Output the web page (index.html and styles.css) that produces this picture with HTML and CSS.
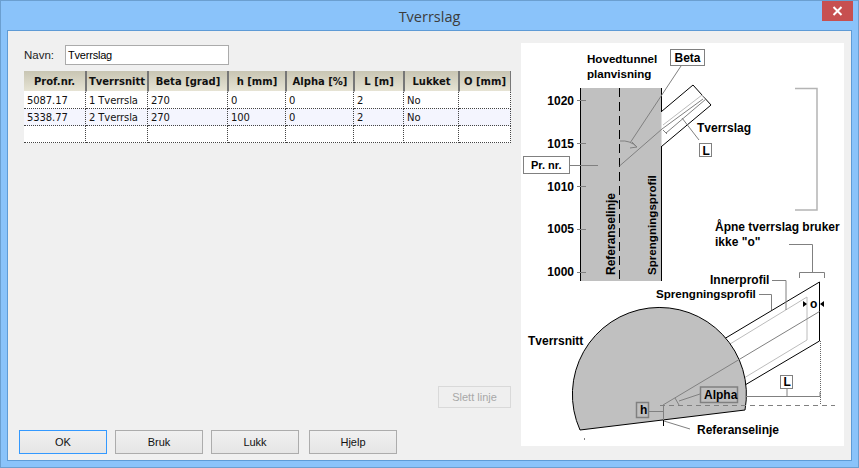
FILE: index.html
```html
<!DOCTYPE html>
<html lang="no">
<head>
<meta charset="utf-8">
<title>Tverrslag</title>
<link rel="stylesheet" href="styles.css">
</head>
<body>
<div class="window">
  <header class="titlebar">
    <span class="title">Tverrslag</span>
    <button class="close" aria-label="Lukk">
      <svg width="11" height="10" viewBox="0 0 11 10"><path d="M1.5 1 L9.5 9 M9.5 1 L1.5 9" stroke="#fff" stroke-width="2" fill="none"/></svg>
    </button>
  </header>
  <div class="client">
    <section class="left">
      <div class="name-row">
        <label class="name-label">Navn:</label>
        <div class="name-input">Tverrslag</div>
      </div>
      <table class="grid">
        <colgroup>
          <col class="c1"><col class="c2"><col class="c3"><col class="c4"><col class="c5"><col class="c6"><col class="c7"><col class="c8">
        </colgroup>
        <thead>
          <tr><th>Prof.nr.</th><th>Tverrsnitt</th><th>Beta [grad]</th><th>h [mm]</th><th>Alpha [%]</th><th>L [m]</th><th>Lukket</th><th>O [mm]</th></tr>
        </thead>
        <tbody>
          <tr><td>5087.17</td><td>1 Tverrsla</td><td>270</td><td>0</td><td>0</td><td>2</td><td>No</td><td></td></tr>
          <tr class="alt"><td>5338.77</td><td>2 Tverrsla</td><td>270</td><td>100</td><td>0</td><td>2</td><td>No</td><td></td></tr>
          <tr><td></td><td></td><td></td><td></td><td></td><td></td><td></td><td></td></tr>
        </tbody>
      </table>
      <div class="delete-row"><button class="btn disabled">Slett linje</button></div>
      <div class="buttons">
        <button class="btn primary">OK</button>
        <button class="btn">Bruk</button>
        <button class="btn">Lukk</button>
        <button class="btn">Hjelp</button>
      </div>
    </section>
    <aside class="panel">
      <svg class="diagram" width="323" height="403" viewBox="521 43 323 403">
        <!-- main tunnel plan -->
        <rect x="580.5" y="88" width="81" height="193" fill="#c0c0c0"/>
        <path d="M580.5 88V281M661.5 88V112M661.5 146V281" class="blk"/>
        <path d="M619.5 88V280" class="blk" stroke-dasharray="9 5"/>
        <!-- ticks -->
        <path d="M577 100.5H586M577 143.5H586M577 186.5H586M577 229.5H586M577 272.5H586" class="gry"/>
        <!-- side tunnel plan -->
        <path d="M661.5 111.5L693 85L711 105L661.5 146.5" class="blk"/>
        <path d="M663 125L702 95L705 99" class="lgt"/>
        <path d="M619.5 166L662 129L703 99" class="gry"/>
        <path d="M666 133L706 99" class="gry"/>
        <path d="M663 130L667 134M682 118L699 140" class="gry"/>
        <path d="M681 66L630 143" class="gry"/>
        <path d="M620 141Q630 140 637 147M632 142L637 147L630 148" class="gry"/>
        <path d="M569 165.5H598" class="gry"/>
        <!-- bracket -->
        <path d="M795 88.5H817V210H795" fill="none" stroke="#b4b4b4" stroke-width="1.5"/>
        <!-- labels boxes -->
        <rect x="670.5" y="49.5" width="34" height="16" class="box"/>
        <rect x="523.5" y="156.5" width="46" height="17" class="box"/>
        <rect x="699.5" y="143.5" width="12" height="13" class="box"/>
        <!-- section: side tunnel -->
        <path d="M724 339L819.5 282V341L745 385" class="blk"/>
        <path d="M730 344L807 297V340L744 378" class="lgt"/>
        <!-- semicircle -->
        <path d="M580 430A87 87 0 1 1 745 410Z" fill="#c0c0c0" stroke="#000"/>
        <path d="M663 405L819.5 311.5" class="gry"/>
        <path d="M660 405.5H835" class="gry" stroke-dasharray="5 4"/>
        <path d="M675 398L679 405M679 401L700 394" class="gry"/>
        <path d="M663.5 405V426" class="gry"/>
        <path d="M663.5 420V426" class="blk"/>
        <path d="M664 421L690 429" class="gry"/>
        <path d="M649 411.5H664" class="gry"/>
        <path d="M746 396.5H820M787 388V396M820 392V397" class="gry"/>
        <path d="M820.5 341V405" fill="none" stroke="#666" stroke-dasharray="1 1"/>
        <rect x="700.5" y="387" width="37" height="15.5" class="box2"/>
        <rect x="636.5" y="402.5" width="12" height="15" class="box2"/>
        <rect x="780.5" y="375.5" width="12" height="13" class="box"/>
        <!-- o callout -->
        <path d="M789 244.5H812.5V272M799.5 278V272.5H824.5V278" class="gry"/>
        <path d="M772 280.5H786V310M759 294.5H771.5V310" class="gry"/>
        <path d="M803 301V307L807 304ZM824 301V307L820 304Z" fill="#000"/>
        <rect x="584" y="438.5" width="1" height="1" fill="#000"/>
        <!-- text -->
        <text x="587" y="63" class="t s">Hovedtunnel</text>
        <text x="587" y="78" class="t s">planvisning</text>
        <text x="674.5" y="62" class="t">Beta</text>
        <text x="574" y="104.5" class="t n">1020</text>
        <text x="574" y="147.5" class="t n">1015</text>
        <text x="574" y="190.5" class="t n">1010</text>
        <text x="574" y="232.5" class="t n">1005</text>
        <text x="574" y="275.5" class="t n">1000</text>
        <text x="531" y="169" class="t x">Pr. nr.</text>
        <text x="697" y="132" class="t">Tverrslag</text>
        <text x="702.5" y="154.5" class="t">L</text>
        <text transform="translate(615 275) rotate(-90)" class="t">Referanselinje</text>
        <text transform="translate(655.5 275) rotate(-90)" class="t s">Sprengningsprofil</text>
        <text x="715" y="231" class="t">Åpne tverrslag bruker</text>
        <text x="715" y="246" class="t">ikke "o"</text>
        <text x="710" y="284" class="t">Innerprofil</text>
        <text x="656" y="298" class="t s">Sprengningsprofil</text>
        <text x="810" y="308" class="t">o</text>
        <text x="528" y="345" class="t">Tverrsnitt</text>
        <text x="704" y="399" class="t">Alpha</text>
        <text x="640" y="414" class="t">h</text>
        <text x="783.5" y="386" class="t">L</text>
        <text x="697" y="434" class="t">Referanselinje</text>
      </svg>
    </aside>
  </div>
</div>
</body>
</html>
```
FILE: styles.css
```css
* { box-sizing: border-box; }
html, body { margin: 0; padding: 0; }
body { width: 859px; height: 468px; overflow: hidden; font-family: "Liberation Sans", Arial, sans-serif; }

.window {
  width: 859px; height: 468px;
  display: flex; flex-direction: column;
  background: #8ac3fa;
  border: 1px solid #6b9fd0;
  padding: 0 6px 6px;
}
.titlebar {
  height: 29px; flex: none;
  display: flex; align-items: center; justify-content: center;
  position: relative;
}
.title { font: 14.5px "Open Sans", sans-serif; color: #3c3c3c; position: relative; top: 1px; }
.close {
  position: absolute; top: 0; right: -1px;
  width: 31px; height: 20px; padding: 0; border: 0;
  background: #c75050;
  display: flex; align-items: center; justify-content: center;
}
.client {
  flex: 1; display: flex; min-height: 0;
  background: #f0f0f0;
  border: 1px solid #5e9bd6;
  padding-left: 11px; padding-right: 7px;
}
.left { width: 492px; display: flex; flex-direction: column; padding-top: 14px; padding-bottom: 6px; }
.panel { margin-left: 10px; margin-top: 12px; width: 323px; height: 403px; background: #fff; }
.diagram { display: block; }

.name-row { display: flex; align-items: center; height: 20px; padding-left: 5px; }
.name-label { width: 41px; font: 11.5px "Liberation Sans", sans-serif; color: #222; }
.name-input {
  width: 164px; height: 20px; background: #fff; border: 1px solid #ababab;
  font: 11px/18px "Liberation Sans", sans-serif; letter-spacing: -0.2px; color: #000; padding-left: 2px;
}

.grid {
  margin: 6px 0 0 5px; width: 487px; table-layout: fixed;
  border-collapse: separate; border-spacing: 0;
  font-family: "DejaVu Sans", sans-serif; color: #111;
}
.c1 { width: 62px; } .c2 { width: 62px; } .c3 { width: 80px; } .c4 { width: 58px; }
.c5 { width: 68px; } .c6 { width: 50px; } .c7 { width: 55px; } .c8 { width: 52px; }
.grid th {
  height: 21px; padding: 0; font-size: 10px; font-weight: 700; text-align: center;
  white-space: nowrap; overflow: hidden;
  background: linear-gradient(#c8c5b3, #e6e3d4);
  border-right: 1px solid #777;
  border-bottom: 1px solid #fff;
}
.grid th + th { border-left: 1px solid #777; }
.grid td {
  height: 17px; padding: 0 0 0 3px; font-size: 10px; letter-spacing: -0.1px; white-space: nowrap; overflow: hidden;
  border-right: 1px dotted #444; border-bottom: 1px dotted #444;
  background: #fff;
}
.grid .alt td { background: #f4f5fe; }

.delete-row { margin-top: auto; display: flex; justify-content: flex-end; }
.btn {
  width: 88px; height: 24px; padding: 0;
  font: 11px "Liberation Sans", sans-serif; color: #111;
  background: linear-gradient(#f0f0f0, #e5e5e5);
  border: 1px solid #acacac;
}
.btn.primary { border-color: #3399ff; }
.btn.disabled { width: 73px; height: 22px; color: #a8a8a8; background: #efefef; border-color: #d9d9d9; }
.buttons { display: flex; gap: 8px; margin-top: 22px; }
.buttons .btn:last-child { margin-left: 2px; }

.blk { fill: none; stroke: #000; stroke-width: 1; }
.gry { fill: none; stroke: #808080; stroke-width: 1; }
.lgt { fill: none; stroke: #bcbcbc; stroke-width: 1; }
.box { fill: #fff; stroke: #808080; stroke-width: 1; }
.box2 { fill: #c0c0c0; stroke: #808080; stroke-width: 1.5; }
.t { font: 700 12px "Liberation Sans", sans-serif; fill: #000; }
.s { font-size: 11.6px; }
.x { font-size: 11px; }
.n { text-anchor: end; }
```
